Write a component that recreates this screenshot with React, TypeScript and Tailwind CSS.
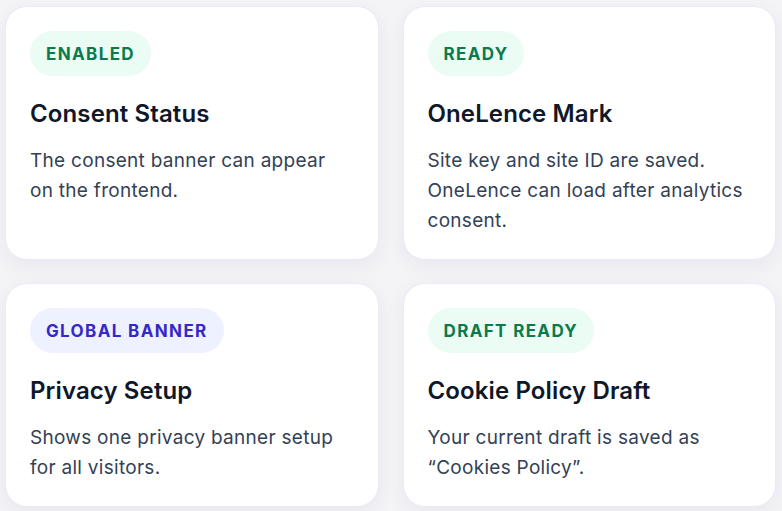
import React from "react";

type Card = {
  badge: string;
  tone: "green" | "indigo";
  title: string;
  body: string;
};

const cards: Card[] = [
  { badge: "Enabled", tone: "green", title: "Consent Status", body: "The consent banner can appear on the frontend." },
  { badge: "Ready", tone: "green", title: "OneLence Mark", body: "Site key and site ID are saved. OneLence can load after analytics consent." },
  { badge: "Global banner", tone: "indigo", title: "Privacy Setup", body: "Shows one privacy banner setup for all visitors." },
  { badge: "Draft ready", tone: "green", title: "Cookie Policy Draft", body: "Your current draft is saved as \u201CCookies Policy\u201D." },
];

export default function App() {
  return (
    <div
      className="min-h-screen bg-[#f4f4f7] pl-[5px] pr-[6px] pt-[6px] pb-[6px]"
      style={{ fontFamily: "Inter, 'Noto Sans', sans-serif" }}
    >
      <div className="grid grid-cols-2 gap-x-[24px] gap-y-[23px]">
        {cards.map((c) => (
          <div
            key={c.title}
            className="rounded-[22px] border border-[#ebe9fb] bg-white px-[24px] pt-[24px] pb-[23px] shadow-[0_6px_20px_rgba(30,30,80,0.06)]"
          >
            <span
              className={
                c.tone === "green"
                  ? "inline-block rounded-full bg-[#eafcf3] px-[16px] pt-[12px] pb-[10px] text-[17px] font-bold uppercase leading-[23px] tracking-[0.08em] text-[#0b7a4c]"
                  : "inline-block rounded-full bg-[#eef1ff] px-[16px] pt-[12px] pb-[10px] text-[17px] font-bold uppercase leading-[23px] tracking-[0.08em] text-[#3627c8]"
              }
            >
              {c.badge}
            </span>
            <h2 className="mt-[22px] text-[24px] font-semibold leading-[32px] tracking-[0.005em] text-[#0f172a]">
              {c.title}
            </h2>
            <p className="mt-[16px] text-[19px] leading-[30px] tracking-[0.015em] text-[#334155]">{c.body}</p>
          </div>
        ))}
      </div>
    </div>
  );
}
